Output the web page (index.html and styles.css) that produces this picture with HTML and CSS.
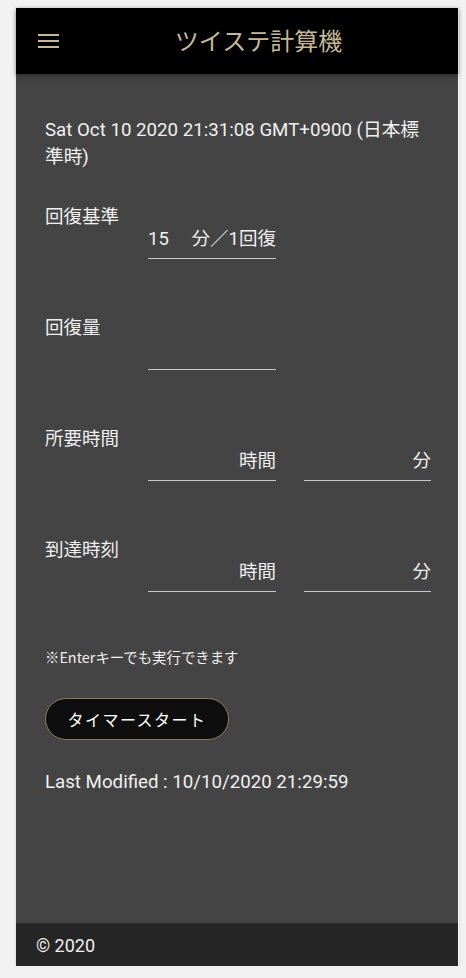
FILE: index.html
```html
<!DOCTYPE html>
<html lang="ja">
<head>
    <meta charset="UTF-8">
    <meta name="viewport" content="width=device-width, initial-scale=1.0">
    <title>ツイステ計算機</title>
    <link rel="stylesheet" href="styles.css">
</head>
<body>
    <div class="app">
        <header class="topbar">
            <svg class="menu-icon" width="21" height="14" viewBox="0 0 21 14">
                <rect x="0" y="0" width="21" height="2" fill="#c6b896"/>
                <rect x="0" y="6" width="21" height="2" fill="#c6b896"/>
                <rect x="0" y="12" width="21" height="2" fill="#c6b896"/>
            </svg>
            <h1 class="title">ツイステ計算機</h1>
        </header>

        <main class="content">
            <p class="now">Sat Oct 10 2020 21:31:08 GMT+0900 (日本標準時)</p>

            <div class="field">
                <label>回復基準</label>
                <div class="row">
                    <div class="input-box">
                        <input type="text" value="15">
                        <span class="suffix">分／1回復</span>
                    </div>
                </div>
            </div>

            <div class="field">
                <label>回復量</label>
                <div class="row">
                    <div class="input-box">
                        <input type="text">
                    </div>
                </div>
            </div>

            <div class="field">
                <label>所要時間</label>
                <div class="row">
                    <div class="input-box">
                        <input type="text">
                        <span class="suffix">時間</span>
                    </div>
                    <div class="input-box">
                        <input type="text">
                        <span class="suffix">分</span>
                    </div>
                </div>
            </div>

            <div class="field">
                <label>到達時刻</label>
                <div class="row">
                    <div class="input-box">
                        <input type="text">
                        <span class="suffix">時間</span>
                    </div>
                    <div class="input-box">
                        <input type="text">
                        <span class="suffix">分</span>
                    </div>
                </div>
            </div>

            <p class="note">※Enterキーでも実行できます</p>

            <button class="start-btn">タイマースタート</button>

            <p class="modified">Last Modified : 10/10/2020 21:29:59</p>
        </main>

        <footer class="footer">© 2020</footer>
    </div>
</body>
</html>
```

FILE: styles.css
```css
body {
    margin: 0;
    padding: 8px 7px 0 16px;
    background: #f2f2f2;
    font-family: Roboto, "Noto Sans CJK JP", sans-serif;
    color: #f0f0f0;
}
.app {
    width: 442px;
    height: 958px;
    display: flex;
    flex-direction: column;
    background: #444444;
    border-right: 1px solid #fafafa;
    box-shadow: 0 0 3px rgba(0, 0, 0, 0.15);
}
.topbar {
    height: 66px;
    flex-shrink: 0;
    background: #000;
    display: flex;
    align-items: center;
    box-shadow: 0 2px 5px rgba(0, 0, 0, 0.35);
}
.menu-icon {
    margin-left: 22px;
}
.title {
    margin: 0 0 4px;
    flex: 1;
    text-align: center;
    font-family: "Noto Sans CJK JP", sans-serif;
    font-weight: 400;
    font-size: 24px;
    color: #c6b896;
}
.content {
    flex: 1;
    padding: 43px 29px 0 29px;
}
.now {
    margin: 0 0 32px;
    font-size: 18.7px;
    line-height: 27px;
}
.field {
    margin-bottom: 55px;
}
.field label {
    display: block;
    font-family: "Noto Sans CJK JP", sans-serif;
    font-size: 18.5px;
    line-height: 24px;
}
.row {
    display: flex;
    gap: 28px;
    padding-left: 103px;
}
.input-box {
    width: 127px;
    height: 32px;
    box-sizing: border-box;
    padding-bottom: 7px;
    border-bottom: 1px solid #c8c8c8;
    display: flex;
    align-items: center;
}
.input-box:first-child {
    width: 128px;
}
.input-box input {
    flex: 1;
    min-width: 0;
    background: transparent;
    border: none;
    outline: none;
    padding: 0;
    color: #f0f0f0;
    font-family: Roboto, sans-serif;
    font-size: 18.5px;
    line-height: 24px;
}
.suffix {
    font-family: Roboto, "Noto Sans CJK JP", sans-serif;
    font-size: 18.5px;
    line-height: 24px;
}
.note {
    margin: 0 0 31px;
    font-family: "Noto Sans CJK JP", sans-serif;
    font-size: 14.4px;
    line-height: 20px;
}
.start-btn {
    display: block;
    width: 184px;
    height: 42px;
    background: #0e0e0e;
    color: #fff;
    border: 1px solid #8c7c5e;
    border-radius: 21px;
    font-family: "Noto Sans CJK JP", sans-serif;
    font-size: 16px;
    letter-spacing: 1.5px;
    cursor: pointer;
}
.modified {
    margin: 29px 0 0;
    font-size: 18.7px;
    line-height: 27px;
}
.footer {
    height: 43px;
    flex-shrink: 0;
    background: #262626;
    border-top: 1px solid #2e2e2e;
    box-sizing: border-box;
    padding-left: 20px;
    display: flex;
    align-items: center;
    font-size: 18px;
}
```
